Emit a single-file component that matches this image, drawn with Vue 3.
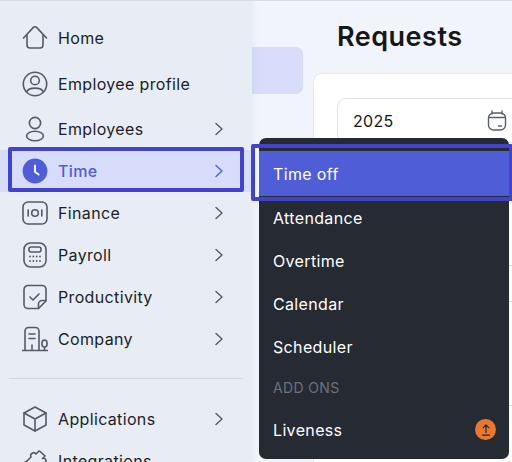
<template>
  <div class="page">
    <aside class="sidebar">
      <nav class="nav">
        <a v-for="item in navItems" :key="item.label" class="row" :class="[item.cls, { active: item.active }]">
          <svg class="icon" viewBox="0 0 26 26" fill="none" stroke="currentColor" stroke-width="1.6" stroke-linecap="round" stroke-linejoin="round">
            <g v-html="item.icon"></g>
          </svg>
          <span class="label">{{ item.label }}</span>
          <svg v-if="item.more" class="chev" viewBox="0 0 10 14" fill="none" stroke="currentColor" stroke-width="1.4" stroke-linecap="round" stroke-linejoin="round">
            <path d="M2 1.5 8 7 2 12.5" />
          </svg>
        </a>
      </nav>
    </aside>

    <main class="main">
      <div class="rail-block"></div>
      <div class="content">
        <h1 class="title">Requests</h1>
        <section class="card">
          <div class="year">
            <span>2025</span>
            <svg class="cal" viewBox="0 0 20 21" fill="none" stroke="#5a5f6b" stroke-width="1.4" stroke-linecap="round">
              <rect x="1.5" y="3" width="17" height="17" rx="5" />
              <path d="M5 1v3M15 1v3M2 7.5h16" />
              <path d="M11.5 16h3" />
            </svg>
          </div>
          <div class="rows">
            <i class="line l1"></i>
            <i class="line l2"></i>
            <i class="tick t1"></i>
            <i class="tick t2"></i>
            <i class="line l3"></i>
          </div>
        </section>
      </div>
    </main>

    <div class="menu">
      <a class="menu-item current">Time off</a>
      <a v-for="m in menuItems" :key="m" class="menu-item">{{ m }}</a>
      <div class="menu-head">ADD ONS</div>
      <a class="menu-item addon">
        <span>Liveness</span>
        <span class="badge">
          <svg viewBox="0 0 14 16" fill="none" stroke="#23262d" stroke-width="1.3" stroke-linecap="round" stroke-linejoin="round">
            <path d="M7 11V2M3.6 5.4 7 2l3.4 3.4M3 14h8" />
          </svg>
        </span>
      </a>
    </div>
  </div>
</template>

<script setup>
const navItems = [
  {
    label: "Home",
    cls: "r-home",
    icon: '<path d="M1.5 13 11.4 2.4a2.2 2.2 0 0 1 3.2 0L24.5 13"/><path d="M5 10v10a3 3 0 0 0 3 3h10a3 3 0 0 0 3-3V10"/>',
  },
  {
    label: "Employee profile",
    cls: "r-profile",
    icon: '<circle cx="13" cy="13" r="11.7"/><circle cx="13" cy="9.5" r="4.3"/><path d="M4.6 21c2-5.2 14.8-5.2 16.8 0"/>',
  },
  {
    label: "Employees",
    more: true,
    cls: "r-people",
    icon: '<circle cx="13" cy="7" r="5.6"/><ellipse cx="13" cy="20" rx="8.4" ry="4.8"/>',
  },
  {
    label: "Time",
    more: true,
    active: true,
    icon: '<circle cx="13" cy="13" r="12.4" fill="#4f5dd6" stroke="none"/><path d="M13 7.5V14l3.6 2.6" stroke="#fff" stroke-width="1.8"/>',
  },
  {
    label: "Finance",
    more: true,
    icon: '<rect x="1" y="2" width="24" height="22" rx="5"/><circle cx="13" cy="13" r="3.3"/><path d="M6.2 10v6M19.8 10v6"/>',
  },
  {
    label: "Payroll",
    more: true,
    icon: '<rect x="2" y="1" width="22" height="24" rx="6.5"/><rect x="7" y="5" width="12" height="5" rx="2"/><path d="M8 14.5h.01M11.3 14.5h.01M14.7 14.5h.01M18 14.5h.01M8 19h.01M11.3 19h.01M14.7 19h.01M18 19h.01" stroke-width="1.8"/>',
  },
  {
    label: "Productivity",
    more: true,
    icon: '<path d="M6 1.5h14a4 4 0 0 1 4 4V17l-7.500 7.500H6a4 4 0 0 1-4-4v-15a4 4 0 0 1 4-4Z"/><path d="M24 16.500h-4a3.500 3.500 0 0 0-3.500 3.500v4.500"/><path d="m8 13 3 3 6-6"/>',
  },
  {
    label: "Company",
    more: true,
    cls: "r-company",
    icon: '<path d="M3 24V5a3.500 3.500 0 0 1 3.500-3.500h7A3.500 3.500 0 0 1 17 5v19"/><path d="M7 8h6M7 12.500h6M10 19v5M.5 24.500h25.500"/><ellipse cx="22.500" cy="17.500" rx="2.600" ry="3.500"/><path d="M22.500 21v3"/>',
  },
  {
    label: "Applications",
    more: true,
    cls: "r-apps",
    icon: '<path d="M13 1 24 7v12l-11 6-11-6V7Z"/><path d="m2 7 11 6 11-6M13 13v12"/>',
  },
  {
    label: "Integrations",
    icon: '<path d="M3 15 9 9c-1.500-3 3-6 5-3l3-3c1 0 5 4 6 5l-2.500 2.500c3-1 5 3 2 5l-7 7c-1 1-4 2-6 0l-6-6c-1-1-1-2 0-3Z"/>',
  },
];

const menuItems = ["Attendance", "Overtime", "Calendar", "Scheduler"];
</script>

<style>
html,
body {
  margin: 0;
  background: #f1f4fa;
}
</style>

<style scoped>
.page {
  position: relative;
  display: flex;
  width: 512px;
  height: 462px;
  overflow: hidden;
  background: #f1f4fa;
  border-top: 1px solid #d8dce5;
  box-sizing: border-box;
  font-family: Inter, "Liberation Sans", sans-serif;
}

.sidebar {
  flex: 0 0 252px;
  padding-top: 16px;
  background: #e8ecf4;
  box-shadow: 1px 0 6px rgba(40, 50, 80, 0.06);
  z-index: 1;
}

.nav {
  display: flex;
  flex-direction: column;
}

.row {
  position: relative;
  display: flex;
  align-items: center;
  flex: 0 0 42px;
  padding: 0 28px 0 22px;
  color: #1b1e26;
  font-size: 16px;
  letter-spacing: 0.35px;
}

.r-profile {
  margin-top: 4px;
}

.r-people {
  margin-top: 3px;
}

.r-company {
  margin-bottom: 38px;
}

.r-company::after {
  content: "";
  position: absolute;
  left: 9px;
  right: 9px;
  bottom: -19px;
  height: 1px;
  background: #d3d7e0;
}

.icon {
  flex: 0 0 26px;
  width: 26px;
  height: 26px;
  margin-right: 10px;
  color: #555a67;
}

.label {
  flex: 1;
  white-space: nowrap;
}

.chev {
  width: 10px;
  height: 14px;
  color: #555a67;
}

.active {
  color: #4f5dd6;
  font-weight: 500;
  background: #d7dcfa;
}

.active .chev {
  color: #4f5dd6;
}

.active::before {
  content: "";
  position: absolute;
  left: 8px;
  right: 8px;
  top: -3px;
  bottom: 0;
  border: 4px solid #4143c8;
  border-radius: 2px;
  box-sizing: border-box;
}

.main {
  flex: 1;
  display: flex;
  min-width: 0;
}

.rail-block {
  flex: 0 0 51px;
  height: 47px;
  margin-top: 46px;
  background: #d6dcfa;
  border-radius: 0 7px 7px 0;
}

.content {
  flex: 1;
  min-width: 0;
  padding-left: 10px;
}

.title {
  margin: 16px 0 0 24px;
  font-size: 27px;
  line-height: 40px;
  font-weight: 600;
  letter-spacing: 0.5px;
  color: #15171c;
}

.card {
  width: 300px;
  height: 400px;
  margin-top: 16px;
  padding: 24px;
  background: #fff;
  border: 1px solid #e4e7ee;
  border-radius: 9px;
  box-sizing: border-box;
}

.year {
  display: flex;
  align-items: center;
  justify-content: space-between;
  width: 183px;
  height: 45px;
  margin-left: -1px;
  padding: 0 0 0 15px;
  border: 1px solid #dfe2e9;
  border-radius: 9px;
  box-sizing: border-box;
  font-size: 16px;
  letter-spacing: 0.3px;
  color: #15171c;
}

.cal {
  width: 20px;
  height: 21px;
  margin-right: 12px;
}

.rows {
  position: relative;
}

.line {
  position: absolute;
  left: 150px;
  width: 60px;
  height: 1px;
  background: #cfd3db;
}

.l1 {
  top: 122px;
}

.l2 {
  top: 158px;
}

.l3 {
  top: 262px;
}

.tick {
  position: absolute;
  left: 174px;
  width: 2px;
  background: #555a67;
}

.t1 {
  top: 184px;
  height: 10px;
}

.t2 {
  top: 280px;
  height: 10px;
}

.menu {
  position: absolute;
  left: 259px;
  top: 137px;
  z-index: 2;
  width: 250px;
  height: 321px;
  padding-top: 13px;
  background: #262a33;
  border-radius: 7px;
  box-sizing: border-box;
  color: #fff;
  font-size: 16px;
  letter-spacing: 0.35px;
}

.menu-item {
  position: relative;
  display: flex;
  align-items: center;
  justify-content: space-between;
  height: 43px;
  padding: 0 14px;
}

.current {
  height: 45px;
  background: #4f5dd6;
}

.current::after {
  content: "";
  position: absolute;
  left: -8px;
  right: -4px;
  top: -7px;
  bottom: -5px;
  border: 4px solid #4143c8;
  border-radius: 2px;
}

.menu-head {
  display: flex;
  align-items: center;
  height: 39px;
  padding-left: 14px;
  font-size: 14px;
  color: #6c717d;
}

.addon {
  height: 45px;
}

.badge {
  display: flex;
  align-items: center;
  justify-content: center;
  width: 21px;
  height: 21px;
  margin-right: -1px;
  border-radius: 50%;
  background: #e97732;
}

.badge svg {
  width: 12px;
  height: 14px;
}
</style>
